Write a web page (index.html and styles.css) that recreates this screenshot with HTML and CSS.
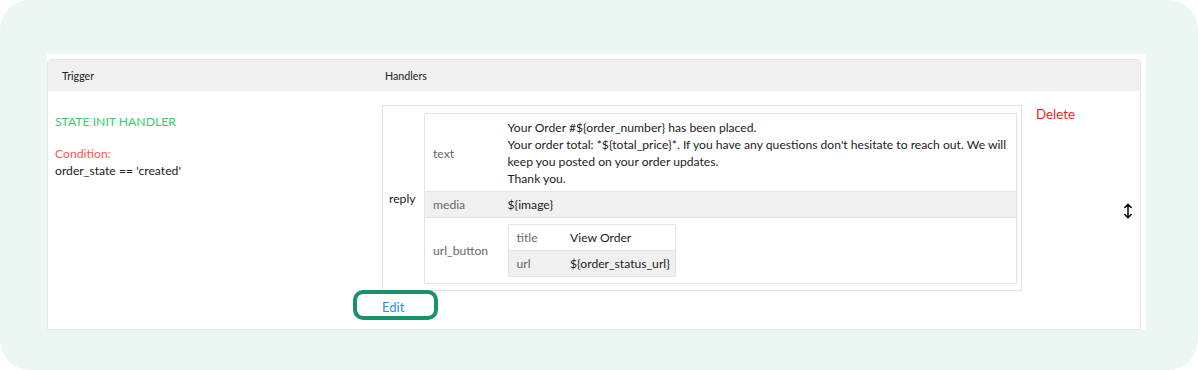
FILE: index.html
```html
<!DOCTYPE html>
<html lang="en">
<head>
  <meta charset="UTF-8">
  <title>Handlers</title>
  <link rel="stylesheet" href="styles.css">
</head>
<body>
  <div class="frame">
    <div class="panel">
      <div class="card">
        <div class="card-head">
          <div class="col-trigger">Trigger</div>
          <div class="col-handlers">Handlers</div>
        </div>

        <div class="card-row">
          <div class="trigger">
            <div class="trigger-name">STATE INIT HANDLER</div>
            <div class="trigger-label">Condition:</div>
            <div class="trigger-cond">order_state == 'created'</div>
          </div>

          <div class="handlers">
            <div class="handler-block">
              <div class="handler-box">
                <div class="handler-type">reply</div>
                <table class="kv">
                  <colgroup>
                    <col class="kv-key-col">
                    <col>
                  </colgroup>
                  <tr class="text-row">
                    <td class="kv-key">text</td>
                    <td class="kv-val">Your Order #${order_number} has been placed.<br>Your order total: *${total_price}*. If you have any questions don't hesitate to reach out. We will keep you posted on your order updates.<br>Thank you.</td>
                  </tr>
                  <tr class="alt">
                    <td class="kv-key">media</td>
                    <td class="kv-val">${image}</td>
                  </tr>
                  <tr>
                    <td class="kv-key">url_button</td>
                    <td class="kv-val nest-cell">
                      <table class="kv kv-nested">
                        <colgroup>
                          <col class="kv-nested-key-col">
                          <col>
                        </colgroup>
                        <tr>
                          <td class="kv-key">title</td>
                          <td class="kv-val">View Order</td>
                        </tr>
                        <tr class="alt">
                          <td class="kv-key">url</td>
                          <td class="kv-val">${order_status_url}</td>
                        </tr>
                      </table>
                    </td>
                  </tr>
                </table>
              </div>
              <a class="edit-link" href="#">Edit</a>
            </div>

            <a class="delete-link" href="#">Delete</a>

            <div class="drag-handle">
              <svg width="10" height="16" viewBox="0 0 10 16">
                <path d="M5 1.5 V14.5 M1.8 4.5 L5 1.3 L8.2 4.5 M1.8 11.5 L5 14.7 L8.2 11.5" fill="none" stroke="#111" stroke-width="1.6" stroke-linecap="round" stroke-linejoin="round"/>
              </svg>
            </div>
          </div>
        </div>
      </div>
    </div>
  </div>
</body>
</html>
```

FILE: styles.css
```css
body {
  margin: 0;
  background: #fff;
  font-family: Lato, "Open Sans", sans-serif;
  color: #1c1c1c;
}

.frame {
  height: 370px;
  box-sizing: border-box;
  background: #ecf6f2;
  border-radius: 30px;
  padding: 54px 52px 0 47px;
}

.panel {
  background: #fff;
  padding: 5px 5px 0 0;
}

.card {
  border: 1px solid #e6e6e6;
  border-radius: 4px 4px 0 0;
  height: 271px;
  box-sizing: border-box;
}

.card-head {
  display: flex;
  height: 31px;
  align-items: center;
  background: #f0f0f0;
  font-size: 10.7px;
  color: #222;
}

.col-trigger {
  width: 313px;
  padding-left: 14px;
}

.col-handlers {
  padding-left: 10px;
}

.card-row {
  display: flex;
  height: 239px;
}

.trigger {
  width: 327px;
  padding: 22px 0 0 7px;
  box-sizing: border-box;
  font-size: 12.2px;
  line-height: 17px;
}

.trigger-name {
  color: #2fd16d;
  margin-bottom: 15px;
}

.trigger-label {
  color: #ff5757;
}

.handlers {
  flex: 1;
  display: flex;
  padding: 14px 0 0 7px;
}

.handler-block {
  width: 640px;
}

.handler-box {
  display: flex;
  align-items: center;
  border: 1px solid #e4e4e4;
  padding: 7px 4px 6px 0;
}

.handler-type {
  width: 41px;
  padding-left: 6px;
  box-sizing: border-box;
  font-size: 12.2px;
}

.kv {
  flex: 1;
  table-layout: fixed;
  border-collapse: collapse;
  border: 1px solid #e4e4e4;
  font-size: 12.15px;
  line-height: 17px;
}

.kv-key-col {
  width: 75px;
}

.kv td {
  vertical-align: middle;
  border-top: 1px solid #e4e4e4;
  padding: 4px 8px;
}

.kv tr.alt td {
  background: #f0f0f0;
}

.kv-key {
  color: #666;
}

.kv-val {
  color: #1c1c1c;
}

.kv tr.text-row td {
  padding: 5px 6px 4px 8px;
}

.kv td.nest-cell {
  padding: 6px 8px;
}

.kv-nested {
  width: 168px;
}

.kv-nested-key-col {
  width: 54px;
}

.kv-nested .kv-val {
  white-space: nowrap;
}

.edit-link {
  position: relative;
  display: inline-block;
  margin-top: 8px;
  font-size: 13px;
  line-height: 16px;
  color: #2b8ff0;
  text-decoration: none;
}

.edit-link::after {
  content: "";
  position: absolute;
  left: -29px;
  right: -34px;
  top: -9px;
  bottom: -5px;
  border: 4px solid #17926c;
  border-radius: 10px;
}

.delete-link {
  margin: 1px 0 0 14px;
  font-size: 13.3px;
  color: #f01d1d;
  text-decoration: none;
  height: 18px;
}

.drag-handle {
  margin: 98px 0 0 48px;
}
```
